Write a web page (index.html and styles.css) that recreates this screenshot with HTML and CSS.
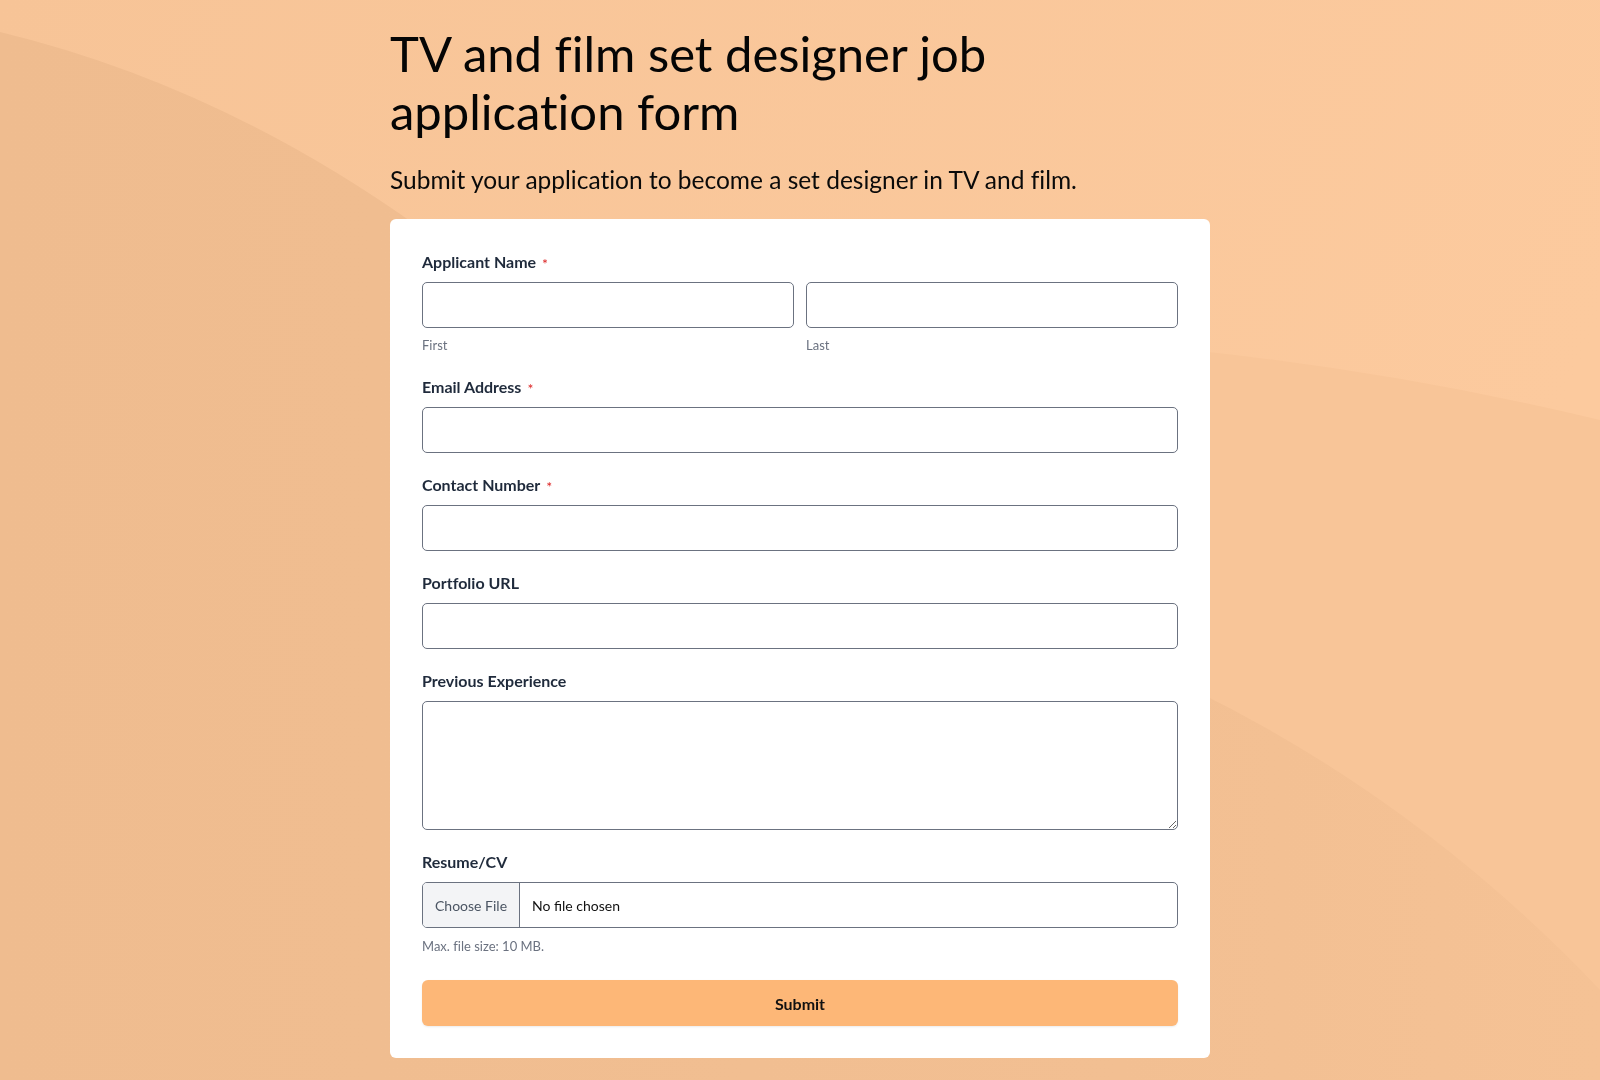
FILE: index.html
```html
<!DOCTYPE html>
<html lang="en">
<head>
<meta charset="utf-8">
<title>TV and film set designer job application form</title>
<link rel="stylesheet" href="styles.css">
</head>
<body>
<svg class="bg" viewBox="0 0 1600 1080" preserveAspectRatio="none" aria-hidden="true">
  <defs>
    <linearGradient id="g1" x1="0" y1="0" x2="1" y2="0.3">
      <stop offset="0" stop-color="#f7c497"/>
      <stop offset="1" stop-color="#fcca9e"/>
    </linearGradient>
    <linearGradient id="g2" x1="0" y1="0" x2="1" y2="0">
      <stop offset="0" stop-color="#efbc8f"/>
      <stop offset="0.7" stop-color="#f2bf92"/>
      <stop offset="1" stop-color="#f5c295"/>
    </linearGradient>
  </defs>
  <rect x="0" y="0" width="1600" height="1080" fill="url(#g1)"/>
  <path d="M1190,350 Q1400,372 1600,420 L1600,1080 L1190,1080 Z" fill="#f8c598"/>
  <path d="M0,32 Q220,85 420,228 L1190,688 Q1420,800 1600,990 L1600,1080 L0,1080 Z" fill="url(#g2)"/>
</svg>
<main class="page">
  <h1 class="title">TV and film set designer job application form</h1>
  <p class="subtitle">Submit your application to become a set designer in TV and film.</p>
  <form class="card">
    <div class="field field-name">
      <label class="label">Applicant Name<span class="req">*</span></label>
      <div class="name-row">
        <div class="name-col">
          <input class="input" type="text">
          <span class="sub">First</span>
        </div>
        <div class="name-col">
          <input class="input" type="text">
          <span class="sub">Last</span>
        </div>
      </div>
    </div>
    <div class="field">
      <label class="label">Email Address<span class="req">*</span></label>
      <input class="input" type="email">
    </div>
    <div class="field">
      <label class="label">Contact Number<span class="req">*</span></label>
      <input class="input" type="tel">
    </div>
    <div class="field">
      <label class="label">Portfolio URL</label>
      <input class="input" type="url">
    </div>
    <div class="field">
      <label class="label">Previous Experience</label>
      <textarea class="input textarea"></textarea>
    </div>
    <div class="field field-file">
      <label class="label">Resume/CV</label>
      <input class="input file" type="file">
      <span class="sub hint">Max. file size: 10 MB.</span>
    </div>
    <button class="submit" type="button">Submit</button>
  </form>
</main>
</body>
</html>
```
FILE: styles.css
```css
html, body {
  margin: 0;
  padding: 0;
}
body {
  font-family: Lato, "Noto Sans", "DejaVu Sans", sans-serif;
  font-variant-ligatures: none;
  color: #111;
  min-height: 1080px;
  background: #f8c598;
}
.bg {
  position: fixed;
  left: 0;
  top: 0;
  width: 100%;
  height: 100%;
  z-index: -1;
}
.page {
  width: 820px;
  margin: 0 auto;
  padding: 25px 0 23px;
}
.title {
  font-size: 49px;
  line-height: 57.6px;
  font-weight: 400;
  margin: 0 0 24px;
  color: #050505;
  width: 660px;
}
.subtitle {
  font-size: 24.5px;
  line-height: 32px;
  margin: 0 0 23px;
  color: #0a0a0a;
}
.card {
  background: #fff;
  border-radius: 6px;
  padding: 32px;
}
.field {
  margin-bottom: 21px;
}
.field-name {
  margin-bottom: 23px;
}
.label {
  display: block;
  height: 21px;
  font-size: 16px;
  line-height: 21px;
  font-weight: 700;
  color: #1f2a3b;
  margin-bottom: 10px;
}
.req {
  color: #dc2626;
  font-size: 14px;
  line-height: 1;
  font-weight: 400;
  margin-left: 6px;
  vertical-align: top;
  position: relative;
  top: 6px;
}
.name-row {
  display: flex;
  gap: 12px;
}
.name-col {
  flex: 1;
  display: flex;
  flex-direction: column;
}
.input {
  display: block;
  box-sizing: border-box;
  width: 100%;
  height: 46px;
  border: 1px solid #6b7280;
  border-radius: 5px;
  background: #fff;
  font-family: inherit;
  font-size: 14px;
  margin: 0;
  padding: 0 12px;
}
.textarea {
  height: 129px;
  resize: vertical;
  padding: 10px 12px;
}
.sub {
  display: block;
  font-size: 13px;
  line-height: 16px;
  color: #6b7280;
  margin-top: 9px;
}
.file {
  padding: 0;
  color: #111;
  line-height: 44px;
  overflow: hidden;
}
.file::file-selector-button {
  height: 44px;
  border: none;
  border-right: 1px solid #6b7280;
  background: #f3f4f6;
  color: #4b5563;
  font-family: inherit;
  font-size: 14px;
  padding: 0 12px;
  margin: 0 12px 0 0;
}
.hint {
  margin-top: 10px;
}
.field-file {
  margin-bottom: 26px;
}
.submit {
  display: block;
  width: 100%;
  height: 46px;
  border: none;
  border-radius: 6px;
  background: #fdb777;
  color: #111;
  font-family: inherit;
  font-size: 16px;
  font-weight: 700;
  box-shadow: 0 1px 2px rgba(0,0,0,0.08);
}
```
